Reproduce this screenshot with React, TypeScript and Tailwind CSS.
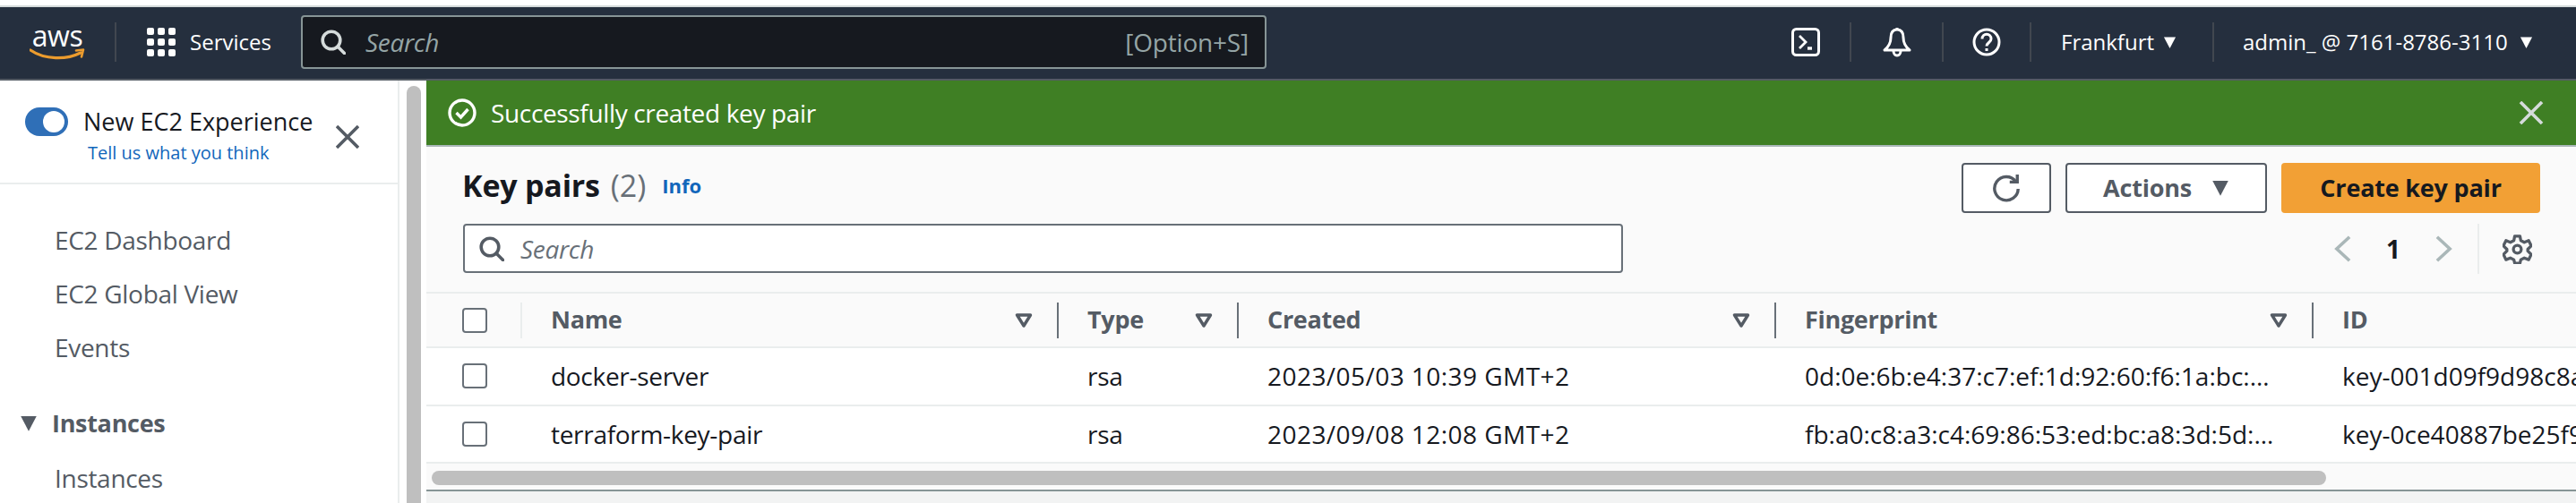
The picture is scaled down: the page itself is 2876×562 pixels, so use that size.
import type { ReactNode } from 'react';

const columns = [
  { label: 'Name', width: 'w-[599px]', filter: true, cell: 'tracking-[-0.3px]' },
  { label: 'Type', width: 'w-[201px]', filter: true, cell: 'tracking-[-0.3px]' },
  { label: 'Created', width: 'w-[600px]', filter: true, cell: 'tracking-[0.45px]' },
  { label: 'Fingerprint', width: 'w-[600px]', filter: true, cell: 'tracking-normal' },
  { label: 'ID', width: 'w-[400px]', filter: false, cell: 'tracking-normal' },
];

const rows = [
  ['docker-server', 'rsa', '2023/05/03 10:39 GMT+2', '0d:0e:6b:e4:37:c7:ef:1d:92:60:f6:1a:bc:…', 'key-001d09f9d98c8a1b2'],
  ['terraform-key-pair', 'rsa', '2023/09/08 12:08 GMT+2', 'fb:a0:c8:a3:c4:69:86:53:ed:bc:a8:3d:5d:…', 'key-0ce40887be25f9c31'],
];

const navLinks = [
  { label: 'EC2 Dashboard', mt: 'mt-[44px]' },
  { label: 'EC2 Global View', mt: 'mt-[24px]' },
  { label: 'Events', mt: 'mt-[24px]' },
];

function Triangle({ className }: { className: string }) {
  return (
    <svg viewBox="0 0 16 16" className={className} fill="currentColor">
      <path d="M1 1.5h14L8 15z" />
    </svg>
  );
}

function NavDivider({ className = '' }: { className?: string }) {
  return <div className={`h-[44px] w-[2px] shrink-0 bg-[#414750] ${className}`} />;
}

function CloseIcon({ className }: { className: string }) {
  return (
    <svg viewBox="0 0 26 26" className={className} fill="none" stroke="currentColor" strokeWidth="3.6">
      <path d="M1 1l24 24M25 1L1 25" />
    </svg>
  );
}

function SearchIcon({ className }: { className: string }) {
  return (
    <svg viewBox="0 0 28 28" className={className} fill="none" stroke="currentColor" strokeWidth="3.6">
      <circle cx="12" cy="12" r="9.8" />
      <path d="M19 19l7.5 7.5" strokeLinecap="round" />
    </svg>
  );
}

function Checkbox() {
  return <div className="h-[28px] w-[28px] rounded-[4px] border-2 border-[#687078] bg-white" />;
}

function FilterIcon() {
  return (
    <svg viewBox="0 0 20 16" className="h-[16px] w-[20px] text-[#545b64]" fill="none" stroke="currentColor" strokeWidth="3.4">
      <path d="M2.5 2h15L10 14z" strokeLinejoin="round" />
    </svg>
  );
}

function OutlineButton({ className, children }: { className: string; children: ReactNode }) {
  return (
    <div className={`flex h-[56px] items-center justify-center rounded-[4px] border-2 border-[#545b64] bg-white ${className}`}>
      {children}
    </div>
  );
}

function TopBar() {
  return (
    <div className="flex h-[82px] shrink-0 items-center border-b-2 border-[#545b64] bg-[#252f3e] pb-[2px] text-white">
      <div className="relative ml-[33px] h-[40px] w-[62px] shrink-0">
        <span className="block text-center text-[32px] leading-[26px] tracking-[-0.5px]">aws</span>
        <svg viewBox="0 0 62 14" className="absolute bottom-0 left-0 h-[14px] w-[62px]" fill="none">
          <path d="M1 3c16 11 40 11 56 3" stroke="#ec9c2e" strokeWidth="3.2" strokeLinecap="round" />
          <path d="M52 3.5l8-1-2 8" stroke="#ec9c2e" strokeWidth="2.6" strokeLinecap="round" strokeLinejoin="round" />
        </svg>
      </div>
      <NavDivider className="ml-[33px]" />
      <div className="ml-[34px] grid h-[32px] w-[32px] shrink-0 grid-cols-3 gap-[4px]">
        {Array.from({ length: 9 }, (_, i) => (
          <span key={i} className="rounded-[2px] bg-white" />
        ))}
      </div>
      <span className="ml-[16px] w-[124px] text-[24px]">Services</span>
      <div className="flex h-[60px] w-[1078px] shrink-0 items-center rounded-[4px] border-2 border-[#879596] bg-[#16191f] pl-[20px] pr-[18px] text-[#95a5a6]">
        <SearchIcon className="h-[28px] w-[28px] text-[#d5dbdb]" />
        <span className="ml-[22px] flex-1 text-[28px] italic tracking-[-0.3px]">Search</span>
        <span className="text-[28px] tracking-[-0.2px]">[Option+S]</span>
      </div>
      <svg viewBox="0 0 32 32" className="ml-[586px] h-[32px] w-[32px] shrink-0" fill="none" stroke="currentColor" strokeWidth="3">
        <rect x="1.5" y="1.5" width="29" height="29" rx="4" />
        <path d="M9 9l7 7-7 7" strokeWidth="2.8" />
        <path d="M18 23h5" strokeWidth="3.4" />
      </svg>
      <NavDivider className="ml-[33px]" />
      <svg viewBox="0 0 34 34" className="ml-[34px] h-[34px] w-[34px] shrink-0" fill="none" stroke="currentColor" strokeWidth="3">
        <path d="M17 3c-5 0-7 4-7 9 0 6-2 10-7 14h28c-5-4-7-8-7-14 0-5-2-9-7-9z" strokeLinejoin="round" />
        <path d="M17 1v3M13 27a4 5 0 0 0 8 0" />
      </svg>
      <NavDivider className="ml-[33px]" />
      <svg viewBox="0 0 32 32" className="ml-[32px] h-[32px] w-[32px] shrink-0" fill="none" stroke="currentColor" strokeWidth="3">
        <circle cx="16" cy="16" r="14" />
        <path d="M11 12.5c0-7 10-7 10 0 0 4-5 4-5 8" />
        <path d="M16 23v3" />
      </svg>
      <NavDivider className="ml-[32px]" />
      <span className="ml-[33px] text-[24px]">Frankfurt</span>
      <Triangle className="ml-[10px] h-[15px] w-[15px] shrink-0" />
      <NavDivider className="ml-[40px]" />
      <span className="ml-[32px] text-[24px]">admin_ @ 7161-8786-3110</span>
      <Triangle className="ml-[13px] h-[15px] w-[15px] shrink-0" />
    </div>
  );
}

function Sidebar() {
  return (
    <div className="flex w-[476px] shrink-0 overflow-hidden bg-white">
      <div className="w-[446px] shrink-0 border-r-2 border-[#eaeded]">
        <div className="relative h-[116px] border-b-2 border-[#eaeded] pl-[28px] pt-[30px]">
          <div className="flex items-center">
            <div className="flex h-[32px] w-[48px] items-center justify-end rounded-full bg-[#2f6fb7] pr-[4px]">
              <div className="h-[24px] w-[24px] rounded-full bg-white" />
            </div>
            <span className="ml-[17px] whitespace-nowrap text-[27px] leading-[32px] text-[#16191f]">New EC2 Experience</span>
          </div>
          <div className="ml-[70px] mt-[3px] text-[20px] leading-[32px] text-[#1166bb]">Tell us what you think</div>
          <CloseIcon className="absolute left-[375px] top-[50px] h-[26px] w-[26px] text-[#545b64]" />
        </div>
        {navLinks.map((link) => (
          <div key={link.label} className={`${link.mt} pl-[61px] text-[28px] leading-[36px] tracking-[-0.3px] text-[#545b64]`}>
            {link.label}
          </div>
        ))}
        <div className="mt-[49px] flex items-center pl-[22px] text-[#545b64]">
          <Triangle className="h-[20px] w-[20px]" />
          <span className="ml-[16px] text-[27px] font-bold leading-[36px] tracking-[-0.3px]">Instances</span>
        </div>
        <div className="mt-[25px] pl-[61px] text-[28px] leading-[36px] tracking-[-0.3px] text-[#545b64]">Instances</div>
      </div>
      <div className="flex-1 pl-[8px] pt-[6px]">
        <div className="h-full w-[16px] rounded-t-full bg-[#bfbfbf]" />
      </div>
    </div>
  );
}

function PanelHeader() {
  return (
    <div className="flex h-[162px] justify-between bg-[#fafafa] pl-[41px] pr-[40px]">
      <div>
        <div className="flex h-[86px] items-center">
          <span className="-ml-[1px] text-[34px] font-bold tracking-[-0.2px] text-[#16191f]">Key pairs</span>
          <span className="ml-[12px] text-[34px] text-[#687078]">(2)</span>
          <span className="ml-[18px] text-[22px] font-bold text-[#1166bb]">Info</span>
        </div>
        <div className="flex h-[55px] w-[1295px] items-center rounded-[4px] border-2 border-[#687078] bg-white pl-[16px] text-[#687078]">
          <SearchIcon className="h-[28px] w-[28px] text-[#545b64]" />
          <span className="ml-[18px] text-[28px] italic tracking-[-0.3px]">Search</span>
        </div>
      </div>
      <div className="pt-[18px]">
        <div className="flex gap-[16px]">
          <OutlineButton className="w-[100px]">
            <svg viewBox="0 0 34 34" className="h-[32px] w-[32px] text-[#545b64]" fill="none" stroke="currentColor" strokeWidth="3.6">
              <path d="M28 9a14 14 0 1 0 3 9" />
              <path d="M30 1v9h-9" />
            </svg>
          </OutlineButton>
          <OutlineButton className="w-[225px]">
            <span className="text-[27px] font-bold tracking-[-0.2px] text-[#545b64]">Actions</span>
            <Triangle className="ml-[22px] h-[20px] w-[20px] text-[#545b64]" />
          </OutlineButton>
          <div className="flex h-[56px] w-[289px] items-center justify-center rounded-[4px] bg-[#f2a035] text-[27px] font-bold tracking-[-0.2px] text-[#16191f]">
            Create key pair
          </div>
        </div>
        <div className="mt-[12px] flex h-[56px] items-center justify-end">
          <svg viewBox="0 0 20 30" className="h-[30px] w-[19px] text-[#aab7b8]" fill="none" stroke="currentColor" strokeWidth="3.8">
            <path d="M18 1L3 15l15 14" />
          </svg>
          <span className="ml-[39px] text-[28px] font-bold text-[#16191f]">1</span>
          <svg viewBox="0 0 20 30" className="ml-[39px] h-[30px] w-[19px] text-[#aab7b8]" fill="none" stroke="currentColor" strokeWidth="3.8">
            <path d="M2 1l15 14L2 29" />
          </svg>
          <div className="ml-[28px] h-[56px] w-[2px] bg-[#eaeded]" />
          <svg viewBox="0 0 34 34" className="ml-[26px] mr-[9px] h-[33px] w-[33px] text-[#545b64]" fill="none" stroke="currentColor" strokeWidth="3.4" strokeLinejoin="round">
            <path d="M14 2h6l1 5 4 2 5-2 3 6-4 4v2l4 4-3 6-5-2-4 2-1 4h-6l-1-4-4-2-5 2-3-6 4-4v-2l-4-4 3-6 5 2 4-2z" />
            <circle cx="17" cy="17" r="4.5" />
          </svg>
        </div>
      </div>
    </div>
  );
}

function KeyPairTable() {
  return (
    <div className="overflow-hidden">
      <div className="flex h-[63px] items-center border-y-2 border-[#eaeded] bg-[#fafafa]">
        <div className="flex h-[40px] w-[107px] shrink-0 items-center border-r-2 border-[#eaeded] pl-[40px]">
          <Checkbox />
        </div>
        {columns.map((col) => (
          <div key={col.label} className={`${col.width} flex h-[40px] shrink-0 items-center justify-between pl-[32px] pr-[27px] ${col.filter ? 'border-r-2 border-[#687078]' : ''}`}>
            <span className="text-[27px] font-bold tracking-[-0.3px] text-[#545b64]">{col.label}</span>
            {col.filter && <FilterIcon />}
          </div>
        ))}
      </div>
      {rows.map((row) => (
        <div key={row[0]} className="flex h-[64.5px] items-center border-b-2 border-[#eaeded] bg-white">
          <div className="w-[107px] shrink-0 pl-[40px]">
            <Checkbox />
          </div>
          {row.map((cell, i) => (
            <div key={i} className={`${columns[i].width} ${columns[i].cell} shrink-0 whitespace-nowrap pl-[32px] text-[28px] text-[#16191f]`}>
              {cell}
            </div>
          ))}
        </div>
      ))}
      <div className="h-[29px] bg-[#fafafa] pl-[6px] pt-[8px]">
        <div className="h-[16px] w-[2115px] rounded-full bg-[#bfbfbf]" />
      </div>
    </div>
  );
}

export default function App() {
  return (
    <div className="flex h-[562px] w-[2876px] flex-col overflow-hidden bg-white font-['Open_Sans',sans-serif]">
      <div className="h-[6px] shrink-0 bg-white" />
      <div className="h-[2px] shrink-0 bg-[#d5dbdb]" />
      <TopBar />
      <div className="flex min-h-0 flex-1">
        <Sidebar />
        <div className="min-w-0 flex-1 bg-[#f2f3f3]">
          <div className="flex h-[72px] items-center bg-[#3f7f24] pl-[24px] pr-[36px] text-white">
            <svg viewBox="0 0 32 32" className="h-[32px] w-[32px]" fill="none" stroke="currentColor" strokeWidth="3.4">
              <circle cx="16" cy="16" r="14" />
              <path d="M9.5 16l5 5 8-9" />
            </svg>
            <span className="ml-[16px] flex-1 text-[28px] tracking-[-0.35px]">Successfully created key pair</span>
            <CloseIcon className="h-[26px] w-[28px] text-[#d5dbdb]" />
          </div>
          <div className="h-[2px] bg-[#aab7b8]" />
          <PanelHeader />
          <KeyPairTable />
          <div className="h-[2px] bg-[#879596]" />
        </div>
      </div>
    </div>
  );
}
